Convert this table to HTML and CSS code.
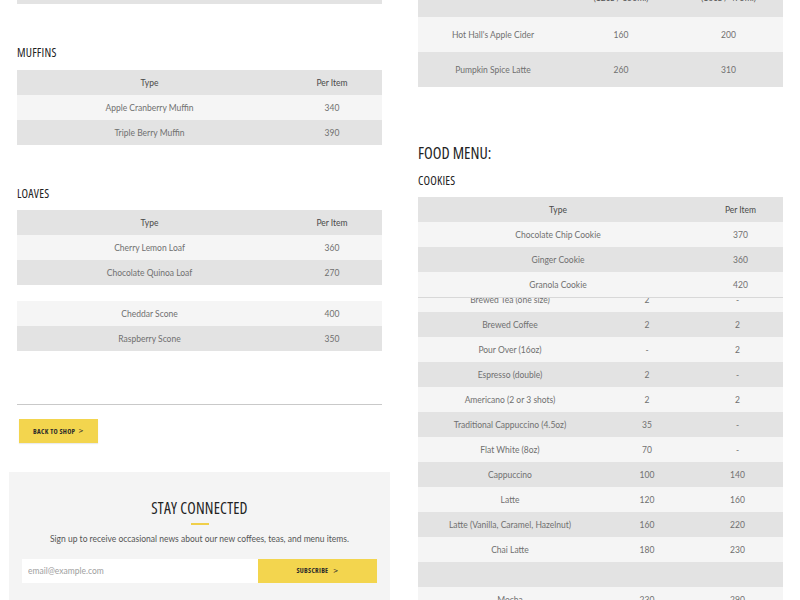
FILE: index.html
```html
<!DOCTYPE html>
<html>
<head>
<meta charset="utf-8">
<link rel="stylesheet" href="styles.css">
</head>
<body>
<div class="page">
  <div class="col left">
    <div class="inner">
      <div class="remnant"></div>
      <h3 class="sub muffins">Muffins</h3>
      <table class="menu two">
        <tr class="head"><th>Type</th><th>Per Item</th></tr>
        <tr class="lt"><td>Apple Cranberry Muffin</td><td>340</td></tr>
        <tr class="dk"><td>Triple Berry Muffin</td><td>390</td></tr>
      </table>
      <h3 class="sub loaves">Loaves</h3>
      <table class="menu two">
        <tr class="head"><th>Type</th><th>Per Item</th></tr>
        <tr class="lt"><td>Cherry Lemon Loaf</td><td>360</td></tr>
        <tr class="dk"><td>Chocolate Quinoa Loaf</td><td>270</td></tr>
      </table>
      <table class="menu two scones">
        <tr class="lt"><td>Cheddar Scone</td><td>400</td></tr>
        <tr class="dk"><td>Raspberry Scone</td><td>350</td></tr>
      </table>
      <hr class="rule">
      <a class="btn back">Back to shop <span class="chev">&gt;</span></a>
    </div>
    <div class="newsletter">
      <h2 class="news-title">Stay Connected</h2>
      <div class="news-bar"></div>
      <p class="news-text">Sign up to receive occasional news about our new coffees, teas, and menu items.</p>
      <form class="news-form">
        <input class="email" type="text" placeholder="email@example.com">
        <button type="button" class="btn subscribe">Subscribe <span class="chev">&gt;</span></button>
      </form>
    </div>
  </div>
  <div class="col right">
    <div class="inner">
      <table class="menu three seasonal">
        <tr class="head"><th></th><th>Small<br>(12oz / 350ml)</th><th>Large<br>(16oz / 475ml)</th></tr>
        <tr class="lt tall"><td>Hot Hall's Apple Cider</td><td>160</td><td>200</td></tr>
        <tr class="dk tall"><td>Pumpkin Spice Latte</td><td>260</td><td>310</td></tr>
      </table>
      <h2 class="food">Food Menu:</h2>
      <h3 class="sub cookies-title">Cookies</h3>
      <table class="menu two cookies">
        <tr class="head"><th>Type</th><th>Per Item</th></tr>
        <tr class="lt"><td>Chocolate Chip Cookie</td><td>370</td></tr>
        <tr class="dk"><td>Ginger Cookie</td><td>360</td></tr>
        <tr class="lt"><td>Granola Cookie</td><td>420</td></tr>
      </table>
      <table class="menu three drinks">
        <tr class="lt"><td>Brewed Tea (one size)</td><td>2</td><td>-</td></tr>
        <tr class="dk"><td>Brewed Coffee</td><td>2</td><td>2</td></tr>
        <tr class="lt"><td>Pour Over (16oz)</td><td>-</td><td>2</td></tr>
        <tr class="dk"><td>Espresso (double)</td><td>2</td><td>-</td></tr>
        <tr class="lt"><td>Americano (2 or 3 shots)</td><td>2</td><td>2</td></tr>
        <tr class="dk"><td>Traditional Cappuccino (4.5oz)</td><td>35</td><td>-</td></tr>
        <tr class="lt"><td>Flat White (8oz)</td><td>70</td><td>-</td></tr>
        <tr class="dk"><td>Cappuccino</td><td>100</td><td>140</td></tr>
        <tr class="lt"><td>Latte</td><td>120</td><td>160</td></tr>
        <tr class="dk"><td>Latte (Vanilla, Caramel, Hazelnut)</td><td>160</td><td>220</td></tr>
        <tr class="lt"><td>Chai Latte</td><td>180</td><td>230</td></tr>
        <tr class="dk"><td></td><td></td><td></td></tr>
        <tr class="lt"><td>Mocha</td><td>230</td><td>290</td></tr>
      </table>
    </div>
  </div>
</div>
</body>
</html>
```

FILE: styles.css
```css
html, body {
  margin: 0;
  padding: 0;
  background: #ffffff;
  overflow: hidden;
}
body {
  font-family: "Lato", "Noto Sans", sans-serif;
  color: #707070;
}
.page {
  display: grid;
  grid-template-columns: 381px 381px;
  column-gap: 20px;
  padding-left: 9px;
  height: 600px;
  overflow: hidden;
}
.col .inner {
  padding: 0 8px;
}
.remnant {
  height: 4px;
  background: #e3e3e3;
}
.sub, .food, .news-title, .btn {
  font-family: "Open Sans", "DejaVu Sans", sans-serif;
  font-stretch: 75%;
  font-variation-settings: "wdth" 75;
  text-transform: uppercase;
  color: #222;
}
.sub {
  font-weight: 500;
  font-size: 12px;
  line-height: 14px;
  letter-spacing: 0.2px;
  margin: 0;
}
.muffins { margin-top: 42px; margin-bottom: 10px; }
.loaves { margin-top: 42px; margin-bottom: 9px; }
.menu {
  width: 100%;
  border-collapse: collapse;
  font-size: 8.5px;
  text-align: center;
  table-layout: fixed;
}
.menu td, .menu th {
  padding: 0;
  height: 25px;
  vertical-align: middle;
}
.menu th {
  font-weight: 400;
  color: #4a4a4a;
}
.menu.two td:first-child, .menu.two th:first-child { width: 265px; }
.head { background: #e3e3e3; }
.lt { background: #f5f5f5; }
.dk { background: #e3e3e3; }
.scones { margin-top: 16px; }
.rule {
  border: 0;
  border-top: 1.5px solid #c9c9c9;
  margin: 53px 0 0;
  height: 0;
}
.btn {
  font-weight: 700;
  color: #2a2a2a;
  background: #f3d54e;
  font-size: 7px;
  letter-spacing: 0.3px;
  border: 0;
}
.back {
  display: inline-flex;
  align-items: center;
  justify-content: center;
  width: 79px;
  height: 24px;
  margin: 14px 0 0 2px;
  box-shadow: 0 1px 1px rgba(0,0,0,0.08);
}
.chev {
  font-weight: 400;
  margin-left: 3px;
  font-family: "DejaVu Sans", sans-serif;
  font-size: 7px;
}
.newsletter {
  margin-top: 29px;
  background: #f4f4f4;
  padding: 26px 13px 30px;
  text-align: center;
}
.news-title {
  margin: 0;
  font-weight: 500;
  font-size: 15.5px;
  line-height: 20px;
  letter-spacing: 0.2px;
}
.news-bar {
  width: 18px;
  height: 1.5px;
  background: #f0cf4a;
  margin: 5px auto 0;
}
.news-text {
  margin: 8px 0 0;
  font-size: 8.5px;
  color: #555;
  line-height: 12px;
}
.news-form {
  display: flex;
  margin-top: 14px;
}
.email {
  flex: 1;
  height: 24px;
  box-sizing: border-box;
  border: 0;
  background: #fff;
  padding: 0 6px;
  font-family: "Lato", "Noto Sans", sans-serif;
  font-size: 8.5px;
  color: #999;
  outline: none;
}
.email::placeholder { color: #a0a0a0; }
.subscribe {
  width: 119px;
  height: 24px;
}
/* right column */
.seasonal {
  margin-top: -31px;
}
.seasonal th {
  height: 35px;
  line-height: 11px;
  vertical-align: bottom;
  padding-bottom: 13px;
  color: #555;
}
.seasonal th:first-child { width: 150px; }
.seasonal th:nth-child(2) { width: 106px; }
.tall td { height: 35px; }
.food {
  margin: 56px 0 0;
  font-weight: 500;
  font-size: 16px;
  line-height: 20px;
  letter-spacing: 0;
}
.cookies-title { margin-top: 11px; margin-bottom: 9px; }
.menu.cookies {
  position: relative;
  z-index: 1;
  border-bottom: 1px solid #d8d8d8;
}
.menu.cookies td:first-child, .menu.cookies th:first-child { width: 280px; }
.drinks {
  margin-top: -11px;
  position: relative;
  z-index: 0;
}
.drinks td:first-child { width: 184px; }
.drinks td:nth-child(2) { width: 90px; }
```
